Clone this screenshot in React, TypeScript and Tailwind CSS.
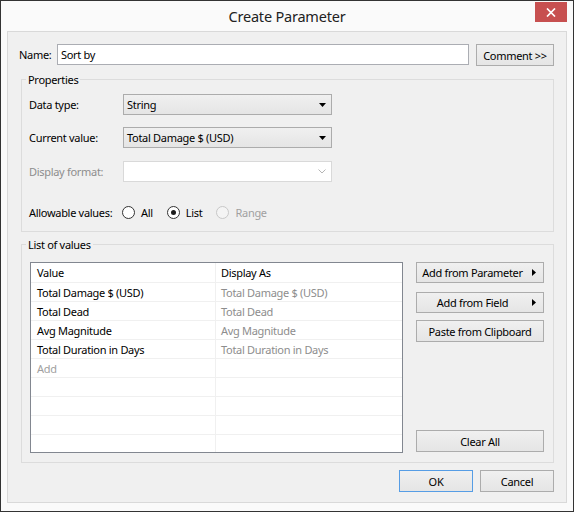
import React from "react";

function Btn({
  children,
  className,
  arrow,
  focused,
}: {
  children: React.ReactNode;
  className: string;
  arrow?: boolean;
  focused?: boolean;
}) {
  return (
    <div
      className={
        "relative flex items-center border bg-linear-to-b from-[#f0f0f0] to-[#e5e5e5] text-[#000] " +
        (focused ? "border-[#569de5] " : "border-[#acacac] ") +
        className
      }
    >
      <span className={arrow ? "flex-1 text-center pr-[15px]" : "flex-1 text-center"}>{children}</span>
      {arrow && (
        <svg className="absolute right-[7px] top-[6px]" width="4" height="7" viewBox="0 0 4 7">
          <path d="M0 0L4 3.5L0 7Z" fill="#000" />
        </svg>
      )}
    </div>
  );
}

function Combo({ value }: { value: string }) {
  return (
    <div className="flex items-center w-[209px] h-[21px] border border-[#acacac] bg-linear-to-b from-[#f0f0f0] to-[#e5e5e5] pl-[3px] pr-[5px]">
      <span className="flex-1 text-[#000]">{value}</span>
      <svg width="7" height="4" viewBox="0 0 7 4">
        <path d="M0 0H7L3.5 4Z" fill="#000" />
      </svg>
    </div>
  );
}

function Radio({ label, checked, disabled }: { label: string; checked?: boolean; disabled?: boolean }) {
  return (
    <div className="flex items-center gap-[6px]">
      <span
        className={
          "w-[13px] h-[13px] rounded-full border flex items-center justify-center " +
          (disabled ? "border-[#c8c8c8] bg-[#f4f4f4]" : "border-[#333333] bg-white")
        }
      >
        {checked && <span className="w-[5px] h-[5px] rounded-full bg-[#1c1c1c]" />}
      </span>
      <span className={disabled ? "text-[#a0a0a0]" : "text-[#000]"}>{label}</span>
    </div>
  );
}

const rows: [string, string, boolean][] = [
  ["Total Damage $ (USD)", "Total Damage $ (USD)", false],
  ["Total Dead", "Total Dead", false],
  ["Avg Magnitude", "Avg Magnitude", false],
  ["Total Duration in Days", "Total Duration in Days", false],
  ["Add", "", true],
  ["", "", false],
  ["", "", false],
  ["", "", false],
  ["", "", false],
];

export default function App() {
  return (
    <div className="w-[574px] h-[512px] border border-[#333333] bg-[#fafafa] flex flex-col font-['Noto_Sans',sans-serif] text-[11px] leading-[15px] tracking-[-0.3px] text-[#000]">
      {/* Title bar */}
      <div className="relative h-[30px] flex items-center justify-center pt-[1px]">
        <span className="text-[14.5px] tracking-[-0.2px] text-[#222]">Create Parameter</span>
        <div className="absolute right-[6px] top-[1px] w-[32px] h-[20px] bg-[#c75050] flex items-center justify-center">
          <svg width="10" height="9" viewBox="0 0 10 9">
            <path d="M1 0.5L9 8.5M9 0.5L1 8.5" stroke="#fff" strokeWidth="1.7" />
          </svg>
        </div>
      </div>

      {/* Content */}
      <div className="mx-[6px] h-[472px] border border-[#d9d9d9] bg-[#f0f0f0] flex flex-col">
        {/* Name row */}
        <div className="mt-[12px] flex items-start h-[22px]">
          <div className="w-[49px] pl-[11px] h-[21px] flex items-center">Name:</div>
          <div className="w-[412px] h-[21px] border border-[#abadb3] bg-white flex items-center pl-[3px]">Sort by</div>
          <Btn className="ml-[7px] w-[78px] h-[22px]">Comment &gt;&gt;</Btn>
        </div>

        {/* Properties */}
        <div className="relative mt-[13px] ml-[13px] w-[533px] h-[153px] border border-[#dcdcdc] pl-[7px] pt-[14px] flex flex-col">
          <span className="absolute left-[4px] -top-[8px] bg-[#f0f0f0] px-[2px]">Properties</span>
          <div className="flex items-center h-[21px]">
            <span className="w-[94px]">Data type:</span>
            <Combo value="String" />
          </div>
          <div className="flex items-center h-[21px] mt-[12px]">
            <span className="w-[94px]">Current value:</span>
            <Combo value="Total Damage $ (USD)" />
          </div>
          <div className="flex items-center h-[21px] mt-[13px]">
            <span className="w-[94px] text-[#8d8d8d]">Display format:</span>
            <div className="flex items-center justify-end w-[209px] h-[21px] border border-[#d9d9d9] bg-white pr-[5px]">
              <svg width="8" height="5" viewBox="0 0 8 5">
                <path d="M0.5 0.5L4 4L7.5 0.5" stroke="#b5b5b5" strokeWidth="1" fill="none" />
              </svg>
            </div>
          </div>
          <div className="flex items-center h-[13px] mt-[24px]">
            <span className="w-[93px]">Allowable values:</span>
            <div className="flex items-center gap-[14px]">
              <Radio label="All" />
              <Radio label="List" checked />
              <Radio label="Range" disabled />
            </div>
          </div>
        </div>

        {/* List of values */}
        <div className="relative mt-[12px] ml-[13px] w-[533px] h-[219px] border border-[#dcdcdc] pl-[8px] pt-[17px] flex">
          <span className="absolute left-[4px] -top-[8px] bg-[#f0f0f0] px-[2px]">List of values</span>
          <div className="w-[373px] h-[191px] border border-[#828790] bg-white overflow-hidden flex flex-col">
            <div className="flex h-[20px] shrink-0 border-b border-[#f0f0f0]">
              <div className="w-[185px] border-r border-[#f0f0f0] pl-[6px] flex items-center">Value</div>
              <div className="flex-1 pl-[5px] flex items-center">Display As</div>
            </div>
            {rows.map((r, i) => (
              <div key={i} className="flex h-[19px] shrink-0 border-b border-[#f0f0f0]">
                <div
                  className={
                    "w-[185px] border-r border-[#f0f0f0] pl-[6px] flex items-center " +
                    (r[2] ? "text-[#a0a0a0]" : "text-[#000]")
                  }
                >
                  {r[0]}
                </div>
                <div className="flex-1 pl-[5px] flex items-center text-[#8d8d8d]">{r[1]}</div>
              </div>
            ))}
          </div>
          <div className="ml-[13px] w-[128px] h-[191px] flex flex-col justify-between">
            <div className="flex flex-col">
              <Btn className="h-[21px]" arrow>Add from Parameter</Btn>
              <Btn className="h-[21px] mt-[9px]" arrow>Add from Field</Btn>
              <Btn className="h-[22px] mt-[7px]">Paste from Clipboard</Btn>
            </div>
            <Btn className="h-[22px] mb-[1px]">Clear All</Btn>
          </div>
        </div>

        {/* Bottom buttons */}
        <div className="mt-[7px] flex justify-end pr-[12px] gap-[7px]">
          <Btn className="w-[74px] h-[22px]" focused>OK</Btn>
          <Btn className="w-[74px] h-[22px]">Cancel</Btn>
        </div>
      </div>
    </div>
  );
}
